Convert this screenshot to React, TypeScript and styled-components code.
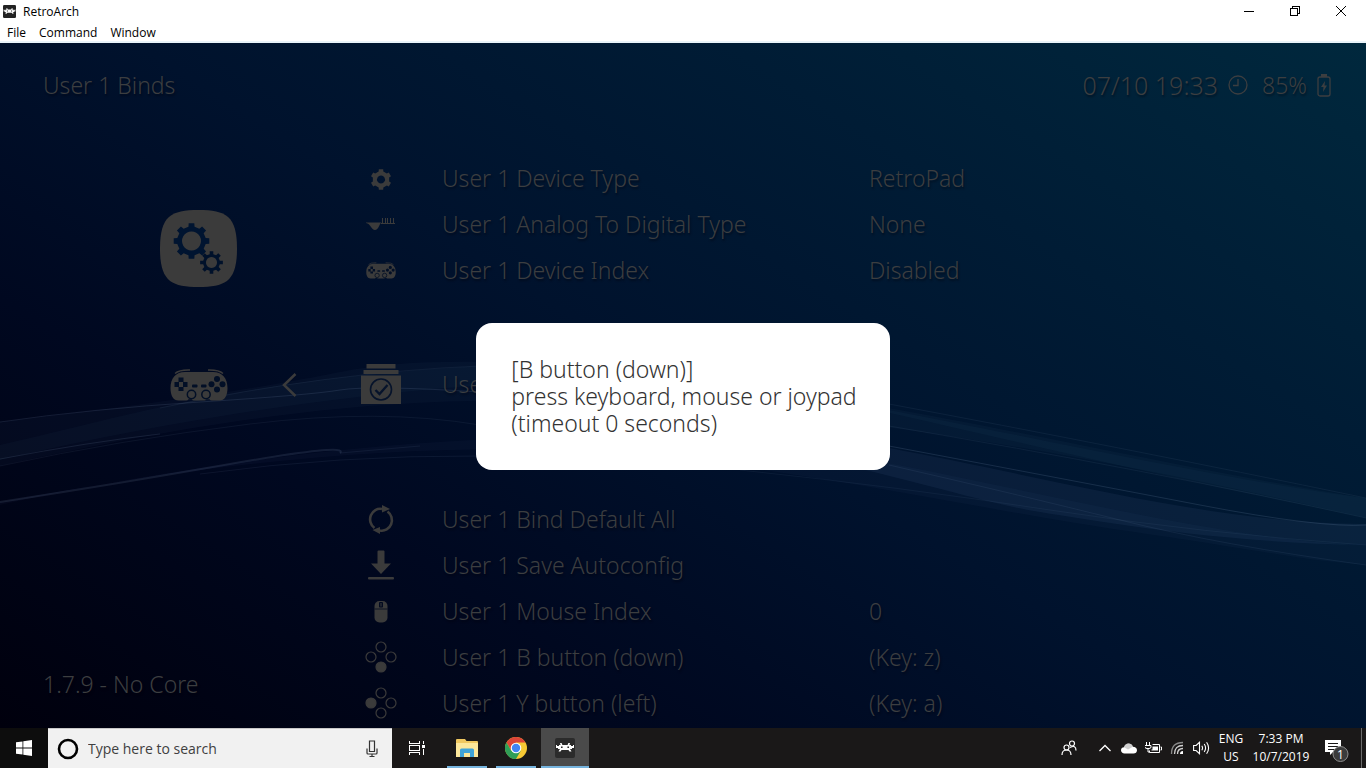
import React from "react";
import styled, { createGlobalStyle } from "styled-components";

const uiFont = `"Open Sans", "Noto Sans", sans-serif`;
const menuFont = `"Noto Sans", "Open Sans", sans-serif`;
const ink = "#3c3e40";
const glyph = "#3b3b3b";

const GlobalStyle = createGlobalStyle`
  *, *::before, *::after { box-sizing: border-box; }
  body { margin: 0; font-family: ${uiFont}; }
  button { margin: 0; padding: 0; border: 0; background: none; color: inherit; font: inherit; cursor: default; }
  ul { margin: 0; padding: 0; list-style: none; }
  svg { display: block; flex: none; }
`;

const Desktop = styled.div`
  display: flex;
  flex-direction: column;
  min-height: 100vh;
  overflow: hidden;
`;

/* ---------- window chrome ---------- */

const WindowFrame = styled.header`
  background: #fff;
  color: #000;
  font-size: 12px;
  border-bottom: 2px solid #e9f4fa;
`;

const TitleBar = styled.div`
  display: flex;
  justify-content: space-between;
  height: 22px;
  padding: 0 2px 0 3px;
`;

const WindowTitle = styled.div`
  display: flex;
  align-items: center;
  gap: 7px;
  font-size: 12px;
`;

const WindowButtons = styled.div`
  display: flex;
`;

const WindowButton = styled.button`
  display: flex;
  align-items: center;
  justify-content: center;
  width: 46px;
  height: 22px;
`;

const MenuBar = styled.nav`
  display: flex;
  gap: 13px;
  height: 19px;
  padding-left: 7px;
`;

const MenuButton = styled.button`
  font-size: 12px;
  line-height: 22px;
`;

/* ---------- emulator menu ---------- */

const Stage = styled.main`
  position: relative;
  flex: 1;
  display: flex;
  flex-direction: column;
  font-family: ${menuFont};
  font-size: 23px;
  font-weight: 300;
  color: ${ink};
  background: linear-gradient(32deg, #00000d 0%, #000820 28%, #00122d 50%, #001c35 74%, #00283d 100%);
  text-shadow: 1px 2px 2px rgba(0, 0, 10, 0.4);
`;

const Waves = styled.svg`
  position: absolute;
  inset: 0;
  width: 100%;
  height: 100%;
`;

const StageHeader = styled.div`
  position: relative;
  display: flex;
  align-items: center;
  justify-content: space-between;
  height: 84px;
  padding: 0 35px 0 43px;
`;

const StageTitle = styled.h1`
  margin: 0;
  font-size: inherit;
  font-weight: inherit;
`;

const Status = styled.div`
  display: flex;
  align-items: center;
  gap: 10px;
`;

const StatusDate = styled.span`
  font-size: 25px;
`;

const StatusBattery = styled.span`
  display: flex;
  align-items: center;
  gap: 10px;
  padding-left: 4px;
`;

const StageBody = styled.div`
  position: relative;
  flex: 1;
  display: flex;
`;

const Sidebar = styled.aside`
  display: flex;
  flex-direction: column;
  width: 340px;
  padding: 83px 0 30px;
`;

const CategoryTile = styled.div`
  display: flex;
  padding-left: 160px;
`;

const ActiveCategory = styled.div`
  display: flex;
  align-items: center;
  gap: 54px;
  height: 92px;
  margin-top: 52px;
  padding-left: 170px;
`;

const Version = styled.p`
  margin: auto 0 0 43px;
  line-height: 28px;
`;

const Settings = styled.ul`
  flex: 1;
  padding-top: 28px;
`;

const SettingItem = styled.li<{ $active?: boolean }>`
  margin: ${(p) => (p.$active ? "45px 0 66px" : "0")};
`;

const SettingButton = styled.button<{ $active?: boolean }>`
  display: grid;
  grid-template-columns: 82px 427px 1fr;
  align-items: center;
  width: 100%;
  height: ${(p) => (p.$active ? "92px" : "46px")};
  text-align: left;
  text-shadow: inherit;
`;

const SettingIcon = styled.span`
  display: flex;
  justify-content: center;
`;

const SettingLabel = styled.span`
  padding-left: 20px;
  white-space: nowrap;
`;

const SettingValue = styled.span`
  padding-left: 20px;
  white-space: nowrap;
`;

const DialogLayer = styled.div`
  position: absolute;
  inset: 0;
  display: flex;
  align-items: center;
  justify-content: center;
  padding-top: 22px;
`;

const Dialog = styled.div`
  padding: 33px 33px 33px 35px;
  border-radius: 16px;
  background: #fff;
  color: #333;
  line-height: 27px;
  white-space: pre-line;
  text-shadow: none;
`;

/* ---------- taskbar ---------- */

const Taskbar = styled.footer`
  display: flex;
  height: 40px;
  background: #1a1818;
  color: #fff;
`;

const StartButton = styled.button`
  display: flex;
  align-items: center;
  justify-content: center;
  width: 48px;
  background: #0d0d0d;
`;

const Search = styled.label`
  display: flex;
  align-items: center;
  gap: 9px;
  width: 344px;
  padding: 0 12px 0 9px;
  background: #f1f1f1;
  border-top: 1px solid #c8c8c8;
`;

const SearchInput = styled.input`
  flex: 1;
  min-width: 0;
  padding: 0;
  border: 0;
  outline: 0;
  background: none;
  font-family: ${uiFont};
  font-size: 14px;
  color: #333;
  &::placeholder { color: #404040; opacity: 1; }
`;

const Apps = styled.div`
  display: flex;
  flex: 1;
  gap: 1px;
`;

const AppButton = styled.button<{ $state?: "open" | "active" }>`
  display: flex;
  align-items: center;
  justify-content: center;
  position: relative;
  width: ${(p) => (p.$state ? "48px" : "50px")};
  background: ${(p) => (p.$state === "active" ? "#4a4a4a" : "none")};
  &::after {
    content: "";
    position: absolute;
    bottom: 0;
    left: ${(p) => (p.$state === "active" ? "0" : "4px")};
    right: ${(p) => (p.$state === "active" ? "0" : "4px")};
    height: 2px;
    background: ${(p) => (p.$state ? "#76b4de" : "none")};
  }
`;

const Tray = styled.div`
  display: flex;
  font-size: 12px;
`;

const TrayButton = styled.button<{ $width?: number }>`
  display: flex;
  align-items: center;
  justify-content: center;
  width: ${(p) => p.$width ?? 24}px;
`;

const TrayText = styled.button<{ $width: number }>`
  width: ${(p) => p.$width}px;
  line-height: 18px;
  font-size: 12px;
  text-align: center;
  white-space: pre-line;
`;

const ShowDesktop = styled.button`
  width: 5px;
  border-left: 1px solid #6a6a6a;
`;

/* ---------- icons ---------- */

const gearPath = (teeth: number, outer: number, inner: number, cx: number, cy: number) => {
  const step = (Math.PI * 2) / teeth;
  const points: string[] = [];
  for (let i = 0; i < teeth; i += 1) {
    const base = i * step - Math.PI / 2;
    [
      [-0.27, inner],
      [-0.2, outer],
      [0.2, outer],
      [0.27, inner],
    ].forEach(([offset, radius]) => {
      const angle = base + offset * step;
      points.push(`${(cx + radius * Math.cos(angle)).toFixed(2)} ${(cy + radius * Math.sin(angle)).toFixed(2)}`);
    });
  }
  return `M${points.join("L")}Z`;
};

const AppLogo = ({ size, bg }: { size: number; bg: string }) => (
  <svg width={size} height={size} viewBox="0 0 20 20" aria-hidden="true">
    <rect width="20" height="20" rx="2" fill={bg} />
    <path
      fill="#fff"
      d="M5 5h1.6l.8 2h5.200l.8-2H15l-.6 2h1.600v1H18V7h1v3h-2v1h-2l1.500 2.500H14.500L13.500 12h-7l-1 1.500H3.500L5 11H3v-1H1V7h1v1h2V7h1.600z"
    />
    <path fill={bg} d="M6 8.500h1.600V10H6zM12.400 8.500H14V10h-1.600z" />
  </svg>
);

const MinimizeIcon = () => (
  <svg width="10" height="10" viewBox="0 0 10 10" shapeRendering="crispEdges" aria-hidden="true">
    <path d="M0 5h10v1H0z" />
  </svg>
);

const RestoreIcon = () => (
  <svg width="10" height="10" viewBox="0 0 10 10" fill="none" stroke="#000" shapeRendering="crispEdges" aria-hidden="true">
    <path d="M.5 2.500h7v7h-7zM2.500 2.500v-2h7v7h-2" />
  </svg>
);

const CloseIcon = () => (
  <svg width="10" height="10" viewBox="0 0 10 10" fill="none" stroke="#000" aria-hidden="true">
    <path d="M0 0l10 10M10 0L0 10" />
  </svg>
);

const ClockIcon = () => (
  <svg width="20" height="20" viewBox="0 0 20 20" fill="none" stroke={ink} strokeWidth="1.300" aria-hidden="true">
    <circle cx="10" cy="10" r="9" />
    <path d="M10 4v6.500H5" />
  </svg>
);

const BatteryIcon = () => (
  <svg width="14" height="23" viewBox="0 0 14 23" aria-hidden="true">
    <rect x="1" y="3" width="12" height="19" rx="2" fill="none" stroke={ink} strokeWidth="1.300" />
    <path d="M4 0h6v3H4z" fill={ink} />
    <path d="M8 7l-4 6h2.500L6 18l4-6.500H7.500z" fill={ink} />
  </svg>
);

const SettingsTileIcon = () => (
  <svg width="77" height="77" viewBox="0 0 77 77" aria-hidden="true">
    <path
      fill={glyph}
      d="M38.500 0C66 0 77 6 77 38.500S66 77 38.500 77 0 71 0 38.500 11 0 38.500 0z"
    />
    <path fill="#001430" fillRule="evenodd" d={`${gearPath(8, 18, 14.5, 31.5, 31)}M31.500 21.500a9.500 9.500 0 1 0 .01 0z`} />
    <path fill="#00112a" fillRule="evenodd" d={`${gearPath(8, 11.5, 8.5, 51.5, 52.5)}M51.500 47a5.500 5.500 0 1 0 .01 0z`} />
  </svg>
);

const GamepadIcon = ({ width, height }: { width: number; height: number }) => (
  <svg width={width} height={height} viewBox="0 0 58 32" aria-hidden="true">
    <path d="M5 4.500Q9 .7 20 1M53 4.500Q49 .7 38 1" fill="none" stroke={glyph} strokeWidth="1.300" />
    <path
      fill={glyph}
      d="M15 3h28c9 0 14.500 6 14.500 16 0 8-3 12.500-8 12.500H41.500q-1 0-2-1.200h-3q-1 1.200-2 1.200h-11q-1 0-2-1.200h-3q-1 1.200-2 1.200H8.500C3.500 31.500.5 27 .5 19 .5 9 6 3 15 3z"
    />
    <g fill="#020f26">
      <path d="M8.500 8.500h5v4.500h4v5h-4v4h-5v-4h-4v-5h4z" />
      <circle cx="47" cy="10" r="3" />
      <circle cx="47" cy="20.500" r="3" />
      <circle cx="41.500" cy="15.200" r="3" />
      <circle cx="52.500" cy="15.200" r="3" />
      <rect x="22" y="15.500" width="5.500" height="3" rx="1" />
      <rect x="31" y="15.500" width="5.500" height="3" rx="1" />
    </g>
    <rect x="9" y="13" width="4" height="5" fill={glyph} />
    <g fill={glyph} stroke="#020f26" strokeWidth="1.500">
      <circle cx="21.500" cy="25.500" r="4.200" />
      <circle cx="36" cy="25.500" r="4.200" />
    </g>
  </svg>
);

const BackIcon = () => (
  <svg width="15" height="24" viewBox="0 0 15 24" fill="none" stroke={glyph} strokeWidth="2.500" aria-hidden="true">
    <path d="M13.500 1L2 12l11.500 11" />
  </svg>
);

const GearIcon = () => (
  <svg width="24" height="24" viewBox="0 0 24 24" aria-hidden="true">
    <path fill={glyph} fillRule="evenodd" d={`${gearPath(6, 10.5, 8.4, 12, 13.5)}M12 9.500a4 4 0 1 0 .01 0z`} />
  </svg>
);

const AnalogIcon = () => (
  <svg width="30" height="16" viewBox="0 0 30 16" aria-hidden="true">
    <path fill={glyph} d="M0 6.500h15.500c-2 1-3 7.500-6.500 7.500S4.500 7.500 0 7z" />
    <path fill="none" stroke={glyph} d="M15 7.500h14M16.500 2v5M19.500 2v5M21.500 2v5M24.500 2v5M27.500 2v5" />
  </svg>
);

const ArchiveIcon = () => (
  <svg width="40" height="40" viewBox="0 0 40 40" aria-hidden="true">
    <path fill={glyph} d="M5.500 0h29v4.500h-29zM2.500 6h35v4h-35zM0 11.500h40V40H0z" />
    <g fill="none" stroke="#06132b" strokeWidth="1.600">
      <circle cx="20" cy="25.500" r="10.500" />
      <path d="M14.500 26l4 4 8-9" strokeWidth="2.300" />
    </g>
  </svg>
);

const ReloadIcon = () => (
  <svg width="26" height="30" viewBox="0 0 26 30" aria-hidden="true">
    <g fill="none" stroke={glyph} strokeWidth="2.600">
      <path d="M6.500 24A10 10.500 0 0 1 14 5" />
      <path d="M19.500 7.500A10 10.500 0 0 1 12 26.500" />
    </g>
    <path fill={glyph} d="M14 1l8 4-8 3.500zM12 30L4.500 26l7.500-3z" />
  </svg>
);

const DownloadIcon = () => (
  <svg width="28" height="30" viewBox="0 0 28 30" aria-hidden="true">
    <path fill={glyph} d="M10.500 1.500q0-1 1-1h5q1 0 1 1v12H24L14 24 4 13.500h6.500z" />
    <rect x="1" y="27" width="26" height="2.500" rx="1" fill={glyph} />
  </svg>
);

const MouseIcon = () => (
  <svg width="16" height="24" viewBox="0 0 16 24" aria-hidden="true">
    <rect x="1.500" y="2" width="13" height="21.500" rx="5" fill={glyph} />
    <rect x="6" y="3" width="4" height="5.500" rx="1" fill="#020a20" />
    <path d="M1.500 10h13" stroke="#020a20" strokeWidth=".8" />
    <path d="M8 4v3.500" stroke={glyph} />
  </svg>
);

const PadButtonsIcon = ({ pressed }: { pressed: "down" | "left" }) => (
  <svg width="32" height="32" viewBox="0 0 32 32" stroke={glyph} strokeWidth="1.200" aria-hidden="true">
    <circle cx="16" cy="6" r="5" fill="none" />
    <circle cx="26" cy="16" r="5" fill="none" />
    <circle cx="6" cy="16" r="5" fill={pressed === "left" ? glyph : "none"} />
    <circle cx="16" cy="26" r="5" fill={pressed === "down" ? glyph : "none"} />
  </svg>
);

const WindowsIcon = () => (
  <svg width="16" height="16" viewBox="0 0 16 16" fill="#fff" aria-hidden="true">
    <path d="M0 2.300l6.500-.9v6.200H0zM7.300 1.300L16 0v7.600H7.300zM0 8.400h6.500v6.200L0 13.700zM7.300 8.400H16V16l-8.700-1.300z" />
  </svg>
);

const CortanaIcon = () => (
  <svg width="22" height="22" viewBox="0 0 22 22" aria-hidden="true">
    <circle cx="11" cy="11" r="9" fill="none" stroke="#000" strokeWidth="2.600" />
  </svg>
);

const MicIcon = () => (
  <svg width="16" height="18" viewBox="0 0 16 18" fill="none" stroke="#333" strokeWidth="1.200" aria-hidden="true">
    <path d="M5.500 1h5v10.500h-5zM3 8.500v4.500q0 1 1 1h8q1 0 1-1V8.500M8 14v2.500M5.500 16.500h5" />
  </svg>
);

const TaskViewIcon = () => (
  <svg width="18" height="16" viewBox="0 0 18 16" fill="none" stroke="#fff" shapeRendering="crispEdges" aria-hidden="true">
    <path d="M1.500 1v2.500h10V1M1.500 15v-2.500h10V15M1.500 5.500h10v5h-10zM15.500 1v3M15.500 9v6" />
    <path d="M14 5h3v3h-3z" fill="#fff" stroke="none" />
  </svg>
);

const FolderIcon = () => (
  <svg width="22" height="20" viewBox="0 0 22 20" aria-hidden="true">
    <path fill="#f0c860" d="M0 2q0-1 1-1h8l1.500 2H21q1 0 1 1v14H0z" />
    <path fill="#fce79b" d="M0 5h22v14H0z" />
    <path fill="#3fa3d8" d="M4 19v-7q0-1.500 1.500-1.500h11q1.500 0 1.500 1.500v7h-4v-4H8v4z" />
  </svg>
);

const ChromeIcon = () => (
  <svg width="22" height="22" viewBox="0 0 22 22" aria-hidden="true">
    <circle cx="11" cy="11" r="11" fill="#f7c934" />
    <path fill="#dc4538" d="M1.470 5.500A11 11 0 0 1 20.530 5.500H11L6.240 13.750z" />
    <path fill="#2f9e57" d="M1.470 5.500A11 11 0 0 0 11 22l4.760-8.250H6.240z" />
    <circle cx="11" cy="11" r="5.300" fill="#fff" />
    <circle cx="11" cy="11" r="4.200" fill="#4285f4" />
  </svg>
);

const PeopleIcon = () => (
  <svg width="16" height="16" viewBox="0 0 16 16" fill="none" stroke="#fff" strokeWidth="1.200" aria-hidden="true">
    <circle cx="5.500" cy="7.500" r="2.500" />
    <path d="M1 15q0-5 4.500-5T10 15" />
    <circle cx="11" cy="3.500" r="2.500" />
    <path d="M9 7.500Q15 4.500 15 10.500" />
  </svg>
);

const ChevronUpIcon = () => (
  <svg width="14" height="8" viewBox="0 0 14 8" fill="none" stroke="#fff" strokeWidth="1.300" aria-hidden="true">
    <path d="M1.500 7L7 1.500 12.500 7" />
  </svg>
);

const CloudIcon = () => (
  <svg width="16" height="11" viewBox="0 0 16 11" aria-hidden="true">
    <path fill="#fff" d="M3.500 10.500C1.500 10.500 0 9 0 7.300s1.300-3 3-3C3.700 1.700 5.500.5 7.500.5c2.100 0 3.700 1.200 4.400 3.200 2.400 0 4.100 1.500 4.100 3.500s-1.500 3.300-3.500 3.300z" />
    <path fill="#b0b0b0" d="M3 4.300Q4 .5 7.500.5 10.500.5 11.900 3.700L7 6.500z" opacity=".6" />
  </svg>
);

const PowerIcon = () => (
  <svg width="17" height="13" viewBox="0 0 17 13" fill="none" stroke="#fff" aria-hidden="true">
    <path d="M1.500 0v3M4.500 0v3M0 3.500h6v1.500Q6 6.500 4 6.500H2Q0 6.500 0 5M3 6.500v3.500h1.500M7.500 2.500h7v8h-10v-2M15.500 5h1v3h-1" />
    <path d="M7.500 4.500h5.500v4H6.500v-1h1z" fill="#fff" stroke="none" />
  </svg>
);

const WifiIcon = () => (
  <svg width="14" height="14" viewBox="0 0 14 14" fill="none" stroke="#d0d0d0" strokeWidth="1.300" aria-hidden="true">
    <path d="M1.500 13Q1.500 1.500 13 1.500" stroke="#8a8a8a" />
    <path d="M4.500 13Q4.500 4.500 13 4.500M7.500 13Q7.500 7.500 13 7.500" />
    <path d="M10 13q0-3 3-3v3z" fill="#fff" stroke="none" />
  </svg>
);

const VolumeIcon = () => (
  <svg width="17" height="14" viewBox="0 0 17 14" fill="none" stroke="#fff" strokeWidth="1.100" aria-hidden="true">
    <path d="M.6 4.500h2.500L6.500 1.300v11.400L3.100 9.500H.6zM8.800 4.800q1.500 2.200 0 4.400M11.200 3q2.800 4 0 8M13.600 1.200q4 5.800 0 11.600" />
  </svg>
);

const NotificationIcon = () => (
  <svg width="24" height="28" viewBox="0 0 24 28" aria-hidden="true">
    <path fill="#fff" d="M0 6h16v12H8l-3 3v-3H0z" />
    <path stroke="#1a1818" d="M3 9.500h10M3 12.500h10M3 15.500h7" />
    <circle cx="15.500" cy="20" r="7.500" fill="#3b3b3b" stroke="#8d8d8d" />
    <text x="15.500" y="24.500" fill="#fff" fontSize="12" textAnchor="middle" fontFamily="Open Sans, sans-serif">
      1
    </text>
  </svg>
);

/* ---------- data ---------- */

type Setting = { label: string; value?: string; icon: React.ReactNode; active?: boolean };

const settings: Setting[] = [
  { label: "User 1 Device Type", value: "RetroPad", icon: <GearIcon /> },
  { label: "User 1 Analog To Digital Type", value: "None", icon: <AnalogIcon /> },
  { label: "User 1 Device Index", value: "Disabled", icon: <GamepadIcon width={30} height={17} /> },
  { label: "User 1 Bind All", icon: <ArchiveIcon />, active: true },
  { label: "User 1 Bind Default All", icon: <ReloadIcon /> },
  { label: "User 1 Save Autoconfig", icon: <DownloadIcon /> },
  { label: "User 1 Mouse Index", value: "0", icon: <MouseIcon /> },
  { label: "User 1 B button (down)", value: "(Key: z)", icon: <PadButtonsIcon pressed="down" /> },
  { label: "User 1 Y button (left)", value: "(Key: a)", icon: <PadButtonsIcon pressed="left" /> },
];

const WaveBackdrop = () => (
  <Waves viewBox="0 43 1366 685" preserveAspectRatio="none" aria-hidden="true">
    <g fill="#7f9fd0">
      <path opacity=".035" d="M0 422C170 402 260 388 340 372S520 360 680 376 1180 475 1366 498V518C1180 475 940 425 700 408S300 400 0 466z" />
      <path opacity=".035" d="M0 445C150 410 240 380 480 366S880 420 1366 518V498C1150 465 900 400 720 385S280 395 0 460z" />
      <path opacity=".07" d="M700 425C900 430 1160 525 1366 524V545C1230 543 1120 525 1040 512S860 460 700 440z" />
      <path opacity=".03" d="M0 502C200 465 380 445 560 450S980 510 1120 530 1300 560 1366 565V545C1180 540 900 450 720 440S300 440 0 505z" />
    </g>
    <g fill="none" stroke="#9db4d8">
      <path opacity=".13" d="M0 422Q90 409 200 402T340 390 480 392 700 398" />
      <path opacity=".07" d="M160 408Q330 372 480 366" />
      <path opacity=".12" d="M0 459Q90 442 160 434" />
      <path opacity=".07" d="M0 466Q120 440 250 424T480 425" />
      <path opacity=".12" strokeWidth="2" d="M0 502Q110 485 230 464T340 453" />
      <path opacity=".08" d="M200 474Q340 455 480 456M340 453L420 446" />
      <path opacity=".07" d="M889 404Q1110 445 1366 498M889 426Q1150 470 1366 518" />
      <path opacity=".15" d="M889 446Q1080 482 1200 505T1366 525" />
      <path opacity=".08" d="M889 465Q1020 495 1120 520T1366 565" />
      <path opacity=".06" d="M740 470Q900 487 1050 510T1366 545" />
    </g>
  </Waves>
);

export default function App() {
  return (
    <Desktop>
      <GlobalStyle />
      <WindowFrame>
        <TitleBar>
          <WindowTitle>
            <AppLogo size={13} bg="#222" />
            <span>RetroArch</span>
          </WindowTitle>
          <WindowButtons>
            <WindowButton aria-label="Minimize"><MinimizeIcon /></WindowButton>
            <WindowButton aria-label="Restore"><RestoreIcon /></WindowButton>
            <WindowButton aria-label="Close"><CloseIcon /></WindowButton>
          </WindowButtons>
        </TitleBar>
        <MenuBar>
          <MenuButton>File</MenuButton>
          <MenuButton>Command</MenuButton>
          <MenuButton>Window</MenuButton>
        </MenuBar>
      </WindowFrame>

      <Stage>
        <WaveBackdrop />
        <StageHeader>
          <StageTitle>User 1 Binds</StageTitle>
          <Status>
            <StatusDate>07/10 19:33</StatusDate>
            <ClockIcon />
            <StatusBattery>
              <span>85%</span>
              <BatteryIcon />
            </StatusBattery>
          </Status>
        </StageHeader>
        <StageBody>
          <Sidebar>
            <CategoryTile><SettingsTileIcon /></CategoryTile>
            <ActiveCategory>
              <GamepadIcon width={58} height={32} />
              <BackIcon />
            </ActiveCategory>
            <Version>1.7.9 - No Core</Version>
          </Sidebar>
          <Settings>
            {settings.map((item) => (
              <SettingItem key={item.label} $active={item.active}>
                <SettingButton $active={item.active}>
                  <SettingIcon>{item.icon}</SettingIcon>
                  <SettingLabel>{item.label}</SettingLabel>
                  <SettingValue>{item.value}</SettingValue>
                </SettingButton>
              </SettingItem>
            ))}
          </Settings>
        </StageBody>
        <DialogLayer>
          <Dialog role="dialog" aria-label="Bind input">
            {"[B button (down)]\npress keyboard, mouse or joypad\n(timeout 0 seconds)"}
          </Dialog>
        </DialogLayer>
      </Stage>

      <Taskbar>
        <StartButton aria-label="Start"><WindowsIcon /></StartButton>
        <Search>
          <CortanaIcon />
          <SearchInput type="text" placeholder="Type here to search" aria-label="Search" />
          <MicIcon />
        </Search>
        <Apps>
          <AppButton aria-label="Task View"><TaskViewIcon /></AppButton>
          <AppButton aria-label="File Explorer" $state="open"><FolderIcon /></AppButton>
          <AppButton aria-label="Chrome" $state="open"><ChromeIcon /></AppButton>
          <AppButton aria-label="RetroArch" $state="active"><AppLogo size={20} bg="#2b2b2b" /></AppButton>
        </Apps>
        <Tray>
          <TrayButton $width={48} aria-label="People"><PeopleIcon /></TrayButton>
          <TrayButton aria-label="Show hidden icons"><ChevronUpIcon /></TrayButton>
          <TrayButton aria-label="OneDrive"><CloudIcon /></TrayButton>
          <TrayButton aria-label="Battery"><PowerIcon /></TrayButton>
          <TrayButton aria-label="Network"><WifiIcon /></TrayButton>
          <TrayButton aria-label="Volume"><VolumeIcon /></TrayButton>
          <TrayText $width={36}>{"ENG\nUS"}</TrayText>
          <TrayText $width={64}>{"7:33 PM\n10/7/2019"}</TrayText>
          <TrayButton $width={48} aria-label="Notifications"><NotificationIcon /></TrayButton>
          <ShowDesktop aria-label="Show desktop" />
        </Tray>
      </Taskbar>
    </Desktop>
  );
}
